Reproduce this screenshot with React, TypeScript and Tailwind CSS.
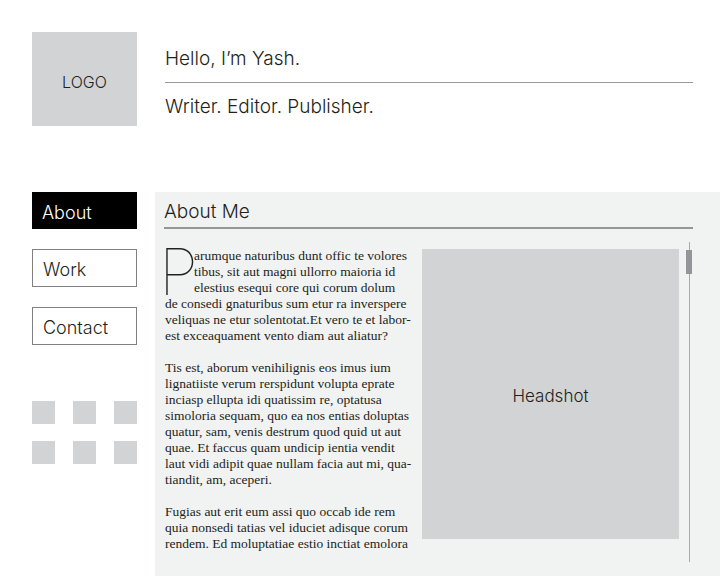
import React from 'react'

const sans = { fontFamily: 'Inter, "Open Sans", sans-serif' }
const serif = { fontFamily: '"Liberation Serif", serif' }

const introLines = [
  'arumque naturibus dunt offic te volores',
  'tibus, sit aut magni ullorro maioria id',
  'elestius esequi core qui corum dolum',
]

const paraOneRest = [
  'de consedi gnaturibus sum etur ra inverspere',
  'veliquas ne etur solentotat.Et vero te et labor-',
  'est exceaquament vento diam aut aliatur?',
]

const paraTwo = [
  'Tis est, aborum venihilignis eos imus ium',
  'lignatiiste verum rerspidunt volupta eprate',
  'inciasp ellupta idi quatissim re, optatusa',
  'simoloria sequam, quo ea nos entias doluptas',
  'quatur, sam, venis destrum quod quid ut aut',
  'quae. Et faccus quam undicip ientia vendit',
  'laut vidi adipit quae nullam facia aut mi, qua-',
  'tiandit, am, aceperi.',
]

const paraThree = [
  'Fugias aut erit eum assi quo occab ide rem',
  'quia nonsedi tatias vel iduciet adisque corum',
  'rendem. Ed moluptatiae estio inctiat emolora',
]

function Lines({ lines }: { lines: string[] }) {
  return (
    <div>
      {lines.map((l) => (
        <div key={l} className="whitespace-nowrap h-4 leading-4">{l}</div>
      ))}
    </div>
  )
}

function NavItem({ label, active }: { label: string; active?: boolean }) {
  return (
    <div
      className={
        active
          ? 'w-[105px] h-[37px] bg-black text-white flex items-center pl-[10px] pt-[3px] text-[18px] font-light'
          : 'w-[105px] h-[38px] border border-[#808080] text-[#231f20] flex items-center pl-[10px] pt-[3px] text-[18px] font-light'
      }
      style={sans}
    >
      {label}
    </div>
  )
}

export default function App() {
  return (
    <div className="w-[720px] h-[576px] bg-white overflow-hidden text-[#231f20]">
      {/* Header */}
      <div className="flex pt-8 pl-8">
        <div className="w-[105px] h-[94px] bg-[#d1d3d4] flex items-center justify-center pt-[6px] text-[16px] font-light" style={sans}>
          LOGO
        </div>
        <div className="ml-[28px] w-[528px] pt-[15px]" style={sans}>
          <div className="text-[19px] font-light leading-6 pb-[11px] border-b border-[#999]">Hello, I’m Yash.</div>
          <div className="text-[19px] font-light leading-6 pt-[12px]">Writer. Editor. Publisher.</div>
        </div>
      </div>

      {/* Body */}
      <div className="flex mt-[66px]">
        <div className="pl-8 w-[155px] flex flex-col">
          <div className="flex flex-col gap-[20px]">
            <NavItem label="About" active />
            <NavItem label="Work" />
            <NavItem label="Contact" />
          </div>
          <div className="grid grid-cols-3 gap-x-[18px] gap-y-[17px] mt-[56px] w-[105px]">
            {[0, 1, 2, 3, 4, 5].map((i) => (
              <div key={i} className="w-[23px] h-[23px] bg-[#d1d3d4]" />
            ))}
          </div>
        </div>

        <div className="flex-1 h-[384px] bg-[#f1f2f2] pl-[9px] pt-[8px]">
          <div className="w-[529px] border-b-2 border-[#939598] text-[19px] font-light leading-6 pb-[3px]" style={sans}>
            About Me
          </div>
          <div className="flex mt-[20px]">
            <div className="w-[258px] pl-px -mt-[1px] text-[13.5px] text-[#231f20]" style={serif}>
              <div className="flex">
                <div className="w-[35px] shrink-0 text-[64px] leading-[48px] font-thin h-[48px] -ml-[6px]" style={sans}>P</div>
                <Lines lines={introLines} />
              </div>
              <Lines lines={paraOneRest} />
              <div className="h-4" />
              <Lines lines={paraTwo} />
              <div className="h-4" />
              <Lines lines={paraThree} />
            </div>
            <div className="w-[257px] h-[290px] bg-[#d1d3d4] flex items-center justify-center pt-[6px] text-[17px] font-light" style={sans}>
              Headshot
            </div>
            <div className="ml-[7px] -mt-[7px] h-[320px] w-[6px] flex justify-center relative">
              <div className="w-px h-full bg-[#a7a9ac]" />
              <div className="absolute top-[8px] left-0 w-[6px] h-[24px] bg-[#939598]" />
            </div>
          </div>
        </div>
      </div>
    </div>
  )
}
